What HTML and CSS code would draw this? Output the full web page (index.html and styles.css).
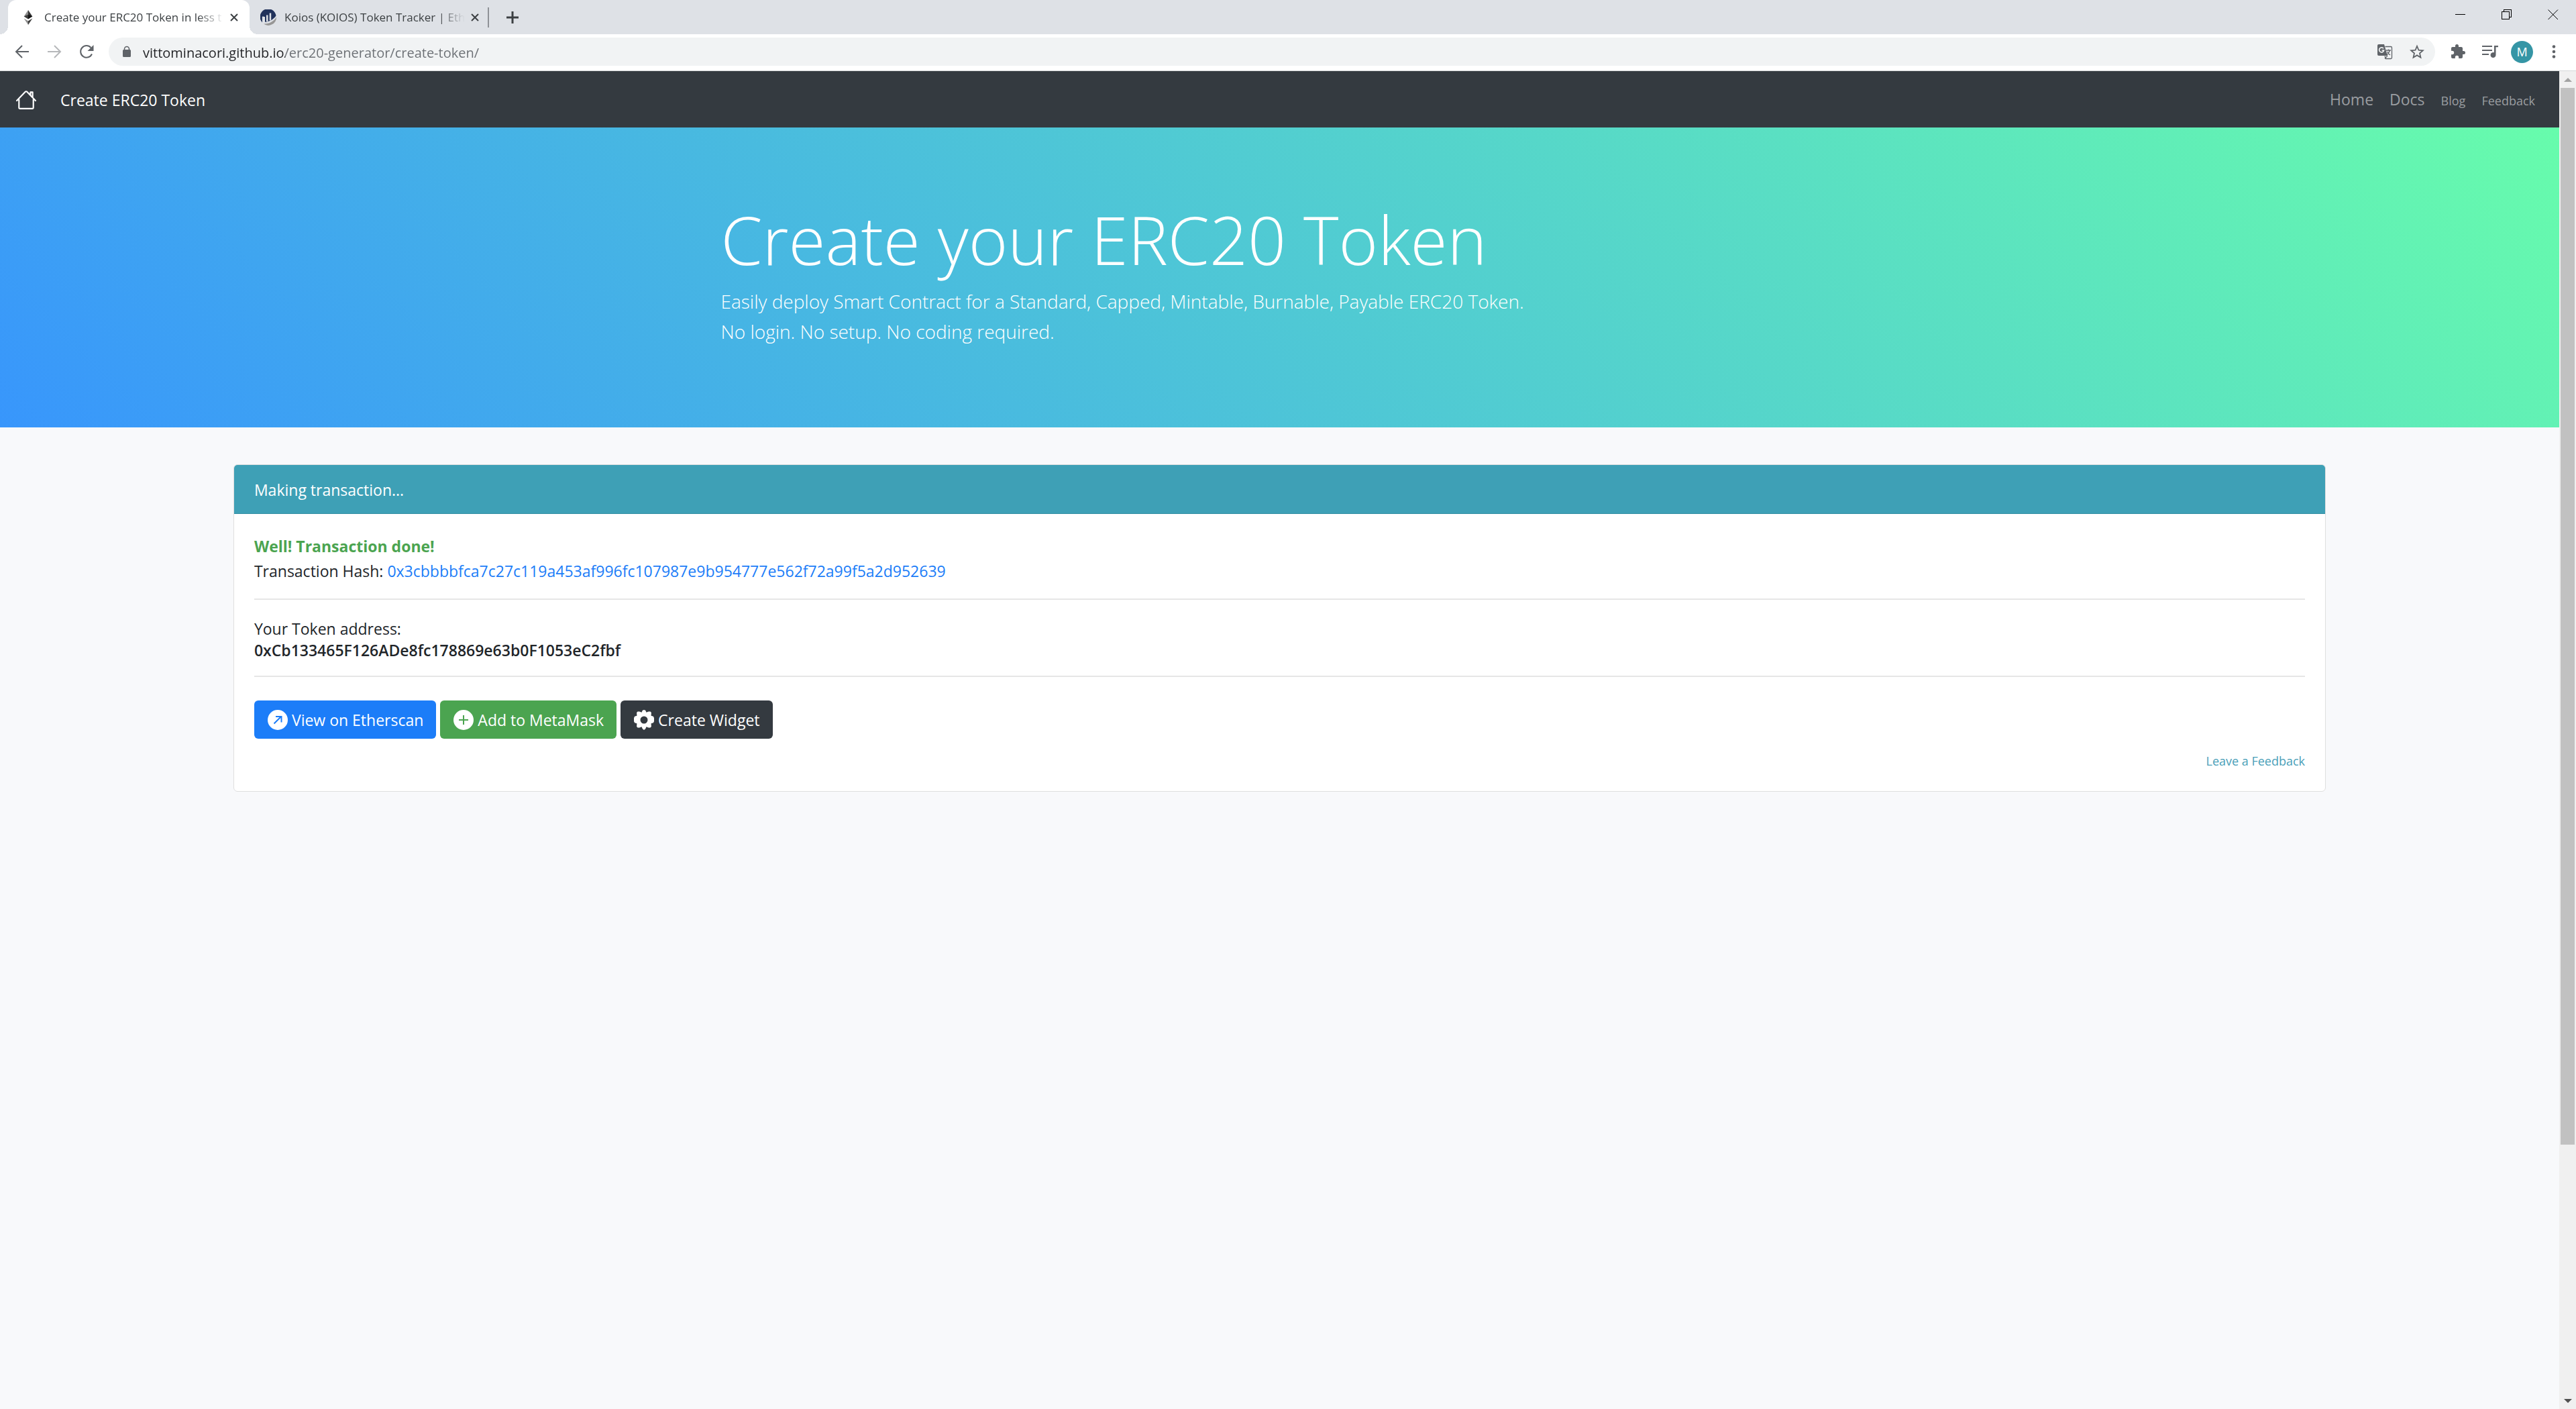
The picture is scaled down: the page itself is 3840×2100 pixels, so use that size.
FILE: index.html
```html
<!DOCTYPE html>
<html lang="en">
<head>
<meta charset="utf-8">
<meta name="viewport" content="width=device-width, initial-scale=1">
<title>Create your ERC20 Token in less than a minute</title>
<link rel="stylesheet" href="styles.css">
</head>
<body>
<div class="browser">
  <div class="tabstrip">
    <div class="tab tab-active">
      <svg class="favicon" viewBox="0 0 24 24" aria-hidden="true"><path fill="#8c8c8c" d="M12 1v12.500l-6.300-2.900z"/><path fill="#343434" d="M12 1v12.500l6.300-2.900z"/><path fill="#3c3c3b" d="M5.700 10.600l6.300-2.800v6.600z"/><path fill="#141414" d="M18.300 10.600L12 7.800v6.600z"/><path fill="#8c8c8c" d="M5.700 13.500l6.300 3.700V23z"/><path fill="#3c3c3b" d="M18.300 13.500L12 17.200V23z"/></svg>
      <span class="tab-title">Create your ERC20 Token in less t</span>
      <button class="tab-close" aria-label="Close tab"><svg viewBox="0 0 14 14" aria-hidden="true"><path d="M2 2l10 10M12 2L2 12"/></svg></button>
    </div>
    <div class="tab">
      <svg class="favicon" viewBox="0 0 24 24" aria-hidden="true"><path fill="#21325b" d="M3 19.500A12 12 0 1 1 23.500 9.500C19 16 12 19 5.500 18.800V11.500a1 1 0 0 0-1-1H3.800a1 1 0 0 0-1 1z"/><path fill="#dee1e6" d="M4.500 11h2.500v8H4.500zM9 8.500h2.500V18H9zM13.700 5.500h2.500v11h-2.500z"/><path fill="#979695" d="M24 11.500A12 12 0 0 1 5 21.500C13 22 20 18 24 11.500z"/></svg>
      <span class="tab-title">Koios (KOIOS) Token Tracker | Eth</span>
      <button class="tab-close" aria-label="Close tab"><svg viewBox="0 0 14 14" aria-hidden="true"><path d="M2 2l10 10M12 2L2 12"/></svg></button>
    </div>
    <button class="new-tab" aria-label="New tab"><svg viewBox="0 0 20 20" aria-hidden="true"><path d="M10 1v18M1 10h18"/></svg></button>
    <div class="window-controls">
      <button aria-label="Minimize"><svg viewBox="0 0 16 16" shape-rendering="crispEdges" aria-hidden="true"><path d="M0 7.500h15"/></svg></button>
      <button aria-label="Restore"><svg viewBox="0 0 16 16" shape-rendering="crispEdges" aria-hidden="true"><path d="M.5 3.500h11v11H.5zM3.500 3.500v-3h11v11h-3"/></svg></button>
      <button aria-label="Close"><svg viewBox="0 0 16 16" aria-hidden="true"><path d="M.5.5l14.500 14.500M15 .5L.5 15"/></svg></button>
    </div>
  </div>

  <div class="toolbar">
    <button class="tool" aria-label="Back"><svg viewBox="0 0 24 24" aria-hidden="true"><path class="line" d="M22 12H4M12 3l-9 9 9 9"/></svg></button>
    <button class="tool tool-off" aria-label="Forward" disabled><svg viewBox="0 0 24 24" aria-hidden="true"><path class="line" d="M2 12h18M12 3l9 9-9 9"/></svg></button>
    <button class="tool" aria-label="Reload"><svg viewBox="0 0 24 24" aria-hidden="true"><path class="line" d="M20 15.500A8.800 8.800 0 1 1 18.500 6"/><path d="M22.500 2v9h-9z"/></svg></button>
    <div class="omnibox">
      <svg class="lock" viewBox="0 0 14 18" aria-hidden="true"><path fill="#5f6368" d="M2.500 6h9A1.500 1.500 0 0 1 13 7.500v8A1.500 1.500 0 0 1 11.500 17h-9A1.500 1.500 0 0 1 1 15.500v-8A1.500 1.500 0 0 1 2.500 6z"/><path fill="none" stroke="#5f6368" stroke-width="1.600" d="M3.500 7V5a3.500 3.500 0 0 1 7 0v2"/></svg>
      <input class="address" type="text" aria-label="Address" value="vittominacori.github.io/erc20-generator/create-token/">
      <button class="tool" aria-label="Translate this page"><svg viewBox="0 0 24 24" aria-hidden="true"><path d="M3 1h8l5 17H3a2 2 0 0 1-2-2V3a2 2 0 0 1 2-2z"/><path fill="none" stroke="#5f6368" stroke-width="1.300" d="M12.500 4.500H21A1.500 1.500 0 0 1 22.500 6v15a1.500 1.500 0 0 1-1.500 1.500h-7.500l-1.500-4M14 10h7M17.500 8.500V10M19.500 10c-.8 3-2.500 5-5 7M15.500 12c1 2 2.500 3.500 4.500 5M16 18l-4 4.500"/><path fill="none" stroke="#f1f3f4" stroke-width="1.700" d="M10 7.300A3.500 3.500 0 1 0 10.600 10H7.500"/></svg></button>
      <button class="tool" aria-label="Bookmark this page"><svg viewBox="0 0 24 24" aria-hidden="true"><path d="M23 9.600l-7.900-.7L12 1.600 8.900 8.900 1 9.600l6 5.200L5.200 22.500 12 18.400l6.800 4.100L17 14.800zM12 16.300l-4.100 2.500L9 14.100l-3.600-3.200 4.800-.4L12 6.100l1.900 4.400 4.800.4-3.700 3.200 1.100 4.700z"/></svg></button>
    </div>
    <button class="tool" aria-label="Extensions"><svg viewBox="0 0 24 24" aria-hidden="true"><path d="M20.500 11H19V7c0-1.100-.9-2-2-2h-4V3.500a2.500 2.500 0 0 0-5 0V5H4c-1.100 0-2 .9-2 2v3.800h1.500a2.700 2.700 0 0 1 0 5.400H2V20c0 1.100.9 2 2 2h3.800v-1.500a2.700 2.700 0 0 1 5.400 0V22H17c1.100 0 2-.9 2-2v-4h1.500a2.500 2.500 0 0 0 0-5z"/></svg></button>
    <button class="tool" aria-label="Media controls"><svg viewBox="0 0 24 24" aria-hidden="true"><path d="M0 3h15v2H0zM0 9h15v2H0zM0 15h10v2H0zM18 3h6v2.200h-3.500V17a4 4 0 1 1-2.500-3.700z"/></svg></button>
    <button class="avatar" aria-label="Profile">M</button>
    <button class="tool" aria-label="Menu"><svg viewBox="0 0 24 24" aria-hidden="true"><circle cx="12" cy="4.500" r="2.300"/><circle cx="12" cy="12" r="2.300"/><circle cx="12" cy="19.500" r="2.300"/></svg></button>
  </div>

  <div class="viewport">
    <div class="page">
      <nav class="navbar">
        <a class="brand-icon" href="#" aria-label="Home"><svg viewBox="0 0 28 28" aria-hidden="true"><path d="M1 15L12.800 2.600a1.600 1.600 0 0 1 2.400 0L27 15M4 12v12.500A1.500 1.500 0 0 0 5.500 26h17a1.500 1.500 0 0 0 1.500-1.500V12M20 7.500V3.200h3v7.500"/></svg></a>
        <a class="brand" href="#">Create ERC20 Token</a>
        <ul class="menu">
          <li><a href="#">Home</a></li>
          <li><a href="#">Docs</a></li>
          <li><a class="small" href="#">Blog</a></li>
          <li><a class="small" href="#">Feedback</a></li>
        </ul>
      </nav>

      <header class="hero">
        <div class="hero-inner">
          <h1>Create your ERC20 Token</h1>
          <p>Easily deploy Smart Contract for a Standard, Capped, Mintable, Burnable, Payable ERC20 Token.<br>No login. No setup. No coding required.</p>
        </div>
      </header>

      <main class="content">
        <section class="card">
          <h2 class="card-header">Making transaction...</h2>
          <div class="card-body">
            <p class="status"><strong>Well! Transaction done!</strong></p>
            <p class="hash">Transaction Hash: <a href="#">0x3cbbbbfca7c27c119a453af996fc107987e9b954777e562f72a99f5a2d952639</a></p>
            <hr>
            <p class="token">Your Token address:<br><b>0xCb133465F126ADe8fc178869e63b0F1053eC2fbf</b></p>
            <hr>
            <div class="actions">
              <button class="btn btn-primary"><svg viewBox="0 0 30 30" aria-hidden="true"><circle cx="15" cy="15" r="15"/><path class="cut" d="M9.500 20.500L20 10M12 10h8.500v8.500"/></svg>View on Etherscan</button>
              <button class="btn btn-success"><svg viewBox="0 0 30 30" aria-hidden="true"><circle cx="15" cy="15" r="15"/><path class="cut" d="M15 8v14M8 15h14"/></svg>Add to MetaMask</button>
              <button class="btn btn-dark"><svg viewBox="0 0 30 30" aria-hidden="true"><path fill-rule="evenodd" d="M15 0l2.200.8 1.300 3 3.300-1.300h2.600l1.500 1.600-.3 4.700 3.300 1 1.100 2.300V15v2.200l-1.100 2-3.300 1 .3 4.700-1.500 1.600h-2.600l-3.300-1.300-1.300 3L15 30l-2.200-1.800-1.300-3-3.300 1.300H5.600l-1.500-1.600.3-4.700-3.300-1L0 17.200v-5.100l1.100-2.300 3.300-1-.3-4.700 1.500-1.600h2.600l3.300 1.300 1.300-3zM15 9.500a5.500 5.500 0 1 0 0 11 5.500 5.500 0 0 0 0-11z"/></svg>Create Widget</button>
            </div>
            <a class="feedback" href="#">Leave a Feedback</a>
          </div>
        </section>
      </main>
    </div>
    <div class="scrollbar" aria-hidden="true">
      <svg class="arrow-up" viewBox="0 0 12 6"><path d="M6 0l6 6H0z"/></svg>
      <div class="track"><div class="thumb"></div></div>
      <svg class="arrow-down" viewBox="0 0 12 6"><path d="M0 0h12L6 6z"/></svg>
    </div>
  </div>
</div>
</body>
</html>
```

FILE: styles.css
```css
* { box-sizing: border-box; }

body {
  margin: 0;
  font-family: "Open Sans", "Noto Sans", sans-serif;
  font-size: 23px;
  line-height: 36px;
  color: #212529;
}

h1, h2, p, ul { margin: 0; padding: 0; }
a { text-decoration: none; }
button {
  border: 0;
  padding: 0;
  background: none;
  font: inherit;
  color: inherit;
}
svg { display: block; }

.browser {
  min-height: 100vh;
  display: flex;
  flex-direction: column;
}

/* Tab strip */
.tabstrip {
  display: flex;
  height: 51px;
  padding-left: 12px;
  background: #dee1e6;
}
.tab {
  position: relative;
  display: flex;
  align-items: center;
  width: 357px;
  padding: 0 16px;
  font-size: 17px;
  color: #3c4043;
}
.tab::after {
  content: "";
  position: absolute;
  right: 0;
  top: 11px;
  width: 2px;
  height: 30px;
  background: #8f9297;
}
.tab-active {
  width: 360px;
  padding: 0 16px 0 18px;
  border-radius: 12px 12px 0 0;
  background: #fff;
}
.tab-active::before,
.tab-active::after {
  content: "";
  position: absolute;
  top: auto;
  bottom: 0;
  width: 12px;
  height: 12px;
}
.tab-active::before {
  left: -12px;
  background: radial-gradient(circle at 0 0, #dee1e6 12px, #fff 12px);
}
.tab-active::after {
  right: -12px;
  background: radial-gradient(circle at 100% 0, #dee1e6 12px, #fff 12px);
}
.favicon { width: 24px; height: 24px; flex: none; }
.tab-title {
  flex: 1;
  margin: 0 8px 0 12px;
  white-space: nowrap;
  -webkit-mask-image: linear-gradient(90deg, #000 calc(100% - 40px), transparent);
  mask-image: linear-gradient(90deg, #000 calc(100% - 40px), transparent);
}
.tab-close svg {
  width: 14px;
  height: 14px;
  stroke: #3c4043;
  stroke-width: 2;
}
.new-tab { width: 70px; display: grid; place-items: center; }
.new-tab svg {
  width: 20px;
  height: 20px;
  stroke: #3c4043;
  stroke-width: 3;
}
.window-controls { display: flex; margin-left: auto; }
.window-controls button {
  display: grid;
  place-items: center;
  width: 69px;
  height: 43px;
}
.window-controls svg {
  width: 16px;
  height: 16px;
  fill: none;
  stroke: #000;
}

/* Toolbar */
.toolbar {
  display: flex;
  align-items: center;
  gap: 12px;
  height: 55px;
  padding: 0 15px 2px;
  border-bottom: 1px solid #d5d7da;
  background: #fff;
}
.tool { display: grid; place-items: center; width: 36px; height: 36px; }
.tool svg { width: 24px; height: 24px; fill: #5f6368; }
.tool .line { fill: none; stroke: #5f6368; stroke-width: 2; }
.tool-off { opacity: .45; }
.omnibox {
  flex: 1;
  display: flex;
  align-items: center;
  gap: 12px;
  height: 42px;
  margin: 0 4px 0 3px;
  padding: 0 9px 0 20px;
  border-radius: 21px;
  background: #f1f3f4;
}
.lock { width: 14px; height: 18px; flex: none; }
.address {
  flex: 1;
  height: 36px;
  margin-left: 5px;
  padding: 2px 0 0;
  border: 0;
  outline: 0;
  font: 20px/34px "Open Sans", "Noto Sans", sans-serif;
  /* host name dark, path grey */
  color: transparent;
  background: linear-gradient(90deg, #202124 212px, #6b6f74 212px);
  -webkit-background-clip: text;
  background-clip: text;
}
.avatar {
  width: 33px;
  height: 33px;
  margin: 0 1px;
  border-radius: 50%;
  background: #3595a5;
  color: #fff;
  font-size: 18px;
  line-height: 33px;
}

/* Web page area */
.viewport { flex: 1; display: flex; }
.page { flex: 1; background: #f8f9fb; }

.navbar {
  display: flex;
  align-items: center;
  height: 84px;
  padding: 2px 36px 0 24px;
  background: #343a40;
}
.brand-icon svg {
  width: 30px;
  height: 30px;
  fill: none;
  stroke: #fff;
  stroke-width: 2;
  stroke-linecap: round;
  stroke-linejoin: round;
}
.brand { margin-left: 36px; color: #fff; }
.menu {
  display: flex;
  align-items: baseline;
  gap: 24px;
  margin-left: auto;
  list-style: none;
}
.menu a { color: #9a9da0; }
.menu .small { font-size: 18px; }

.hero {
  padding: 101px 0 120px;
  background: linear-gradient(45deg, #3896fc, #67fcac);
  color: #fff;
}
.hero-inner {
  max-width: 1710px;
  margin: 0 auto;
  padding: 0 22px;
}
.hero h1 {
  margin-bottom: 6px;
  font-size: 100px;
  line-height: 130px;
  font-weight: 300;
}
.hero p { font-size: 28px; line-height: 45px; font-weight: 300; }

.content {
  width: calc(100% * 10 / 12);
  margin: 0 auto;
  padding: 55px 30px;
}
.card {
  border: 1px solid #dfdfdf;
  border-radius: 6px;
  background: #fff;
  overflow: hidden;
}
.card-header {
  padding: 19px 30px 17px;
  border-bottom: 1px solid #338ea3;
  background: #3ea0b6;
  color: #fff;
  font-size: 23px;
  font-weight: 400;
}
.card-body { display: flow-root; padding: 30px; }
.status { color: #4ba450; line-height: 37px; }
.status strong { font-weight: 700; }
.hash { line-height: 37px; }
.hash a { color: #1c7df8; }
hr { height: 2px; margin: 22px 0 27px; border: 0; background: #e6e6e6; }
.token { line-height: 32px; }
.token b { font-weight: 600; }
.actions { display: flex; gap: 6px; margin-top: 35px; }
.btn {
  display: flex;
  align-items: center;
  gap: 6px;
  height: 57px;
  padding: 0 19px 0 20px;
  border-radius: 6px;
  color: #fff;
}
.btn svg { width: 30px; height: 30px; fill: #fff; }
.btn .cut { fill: none; stroke-width: 2; }
.btn-primary { background: #1c7df8; }
.btn-primary .cut { stroke: #1c7df8; }
.btn-success { background: #4ba450; }
.btn-success .cut { stroke: #4ba450; }
.btn-dark { background: #343a40; }
.feedback {
  display: block;
  margin-top: 18px;
  font-size: 18px;
  line-height: 30px;
  text-align: right;
  color: #4aa0b8;
}

/* Scrollbar */
.scrollbar {
  width: 25px;
  display: flex;
  flex-direction: column;
  align-items: center;
  padding: 10px 2px 9px;
  background: #f0f0f0;
}
.scrollbar svg { width: 12px; height: 6px; }
.arrow-up { fill: #a3a3a3; }
.arrow-down { fill: #505050; }
.track { flex: 1; width: 21px; margin: 9px 0; }
.thumb { height: 81%; background: #c1c1c1; }
```
